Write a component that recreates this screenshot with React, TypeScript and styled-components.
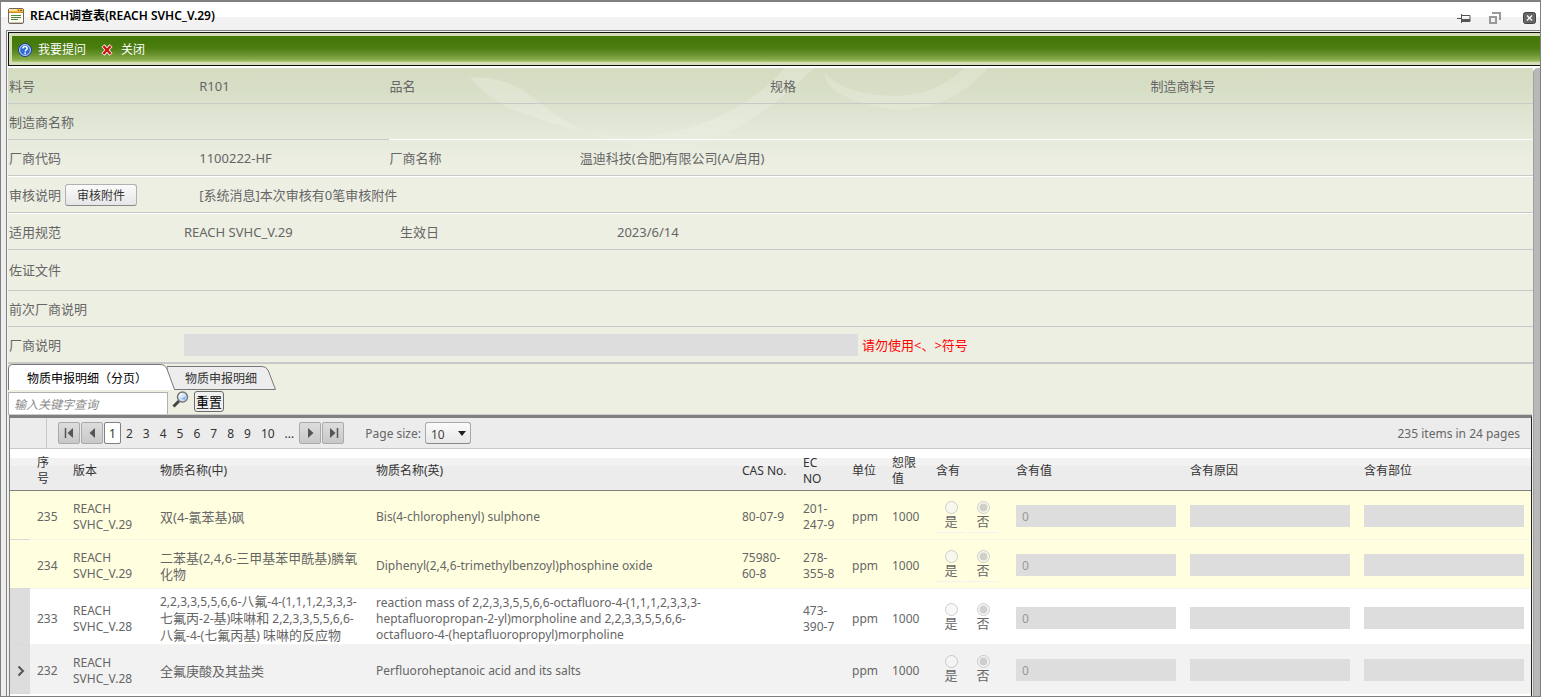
import React, { useState } from 'react';
import styled, { createGlobalStyle } from 'styled-components';

const GlobalStyle = createGlobalStyle`
  *, *::before, *::after { box-sizing: border-box; }
  body {
    margin: 0;
    background: #eeeeee;
    color: #666666;
    font-family: "Noto Sans", "Noto Sans CJK SC", sans-serif;
    font-size: 12px;
  }
  button, input, select { font-family: inherit; font-size: 12px; margin: 0; }
`;

const Window = styled.div`
  display: flex;
  flex-direction: column;
  min-height: 100vh;
  border: 1px solid #808080;
  border-top-width: 2px;
  background: #eeeeee;
`;

const TitleBar = styled.header`
  display: flex;
  align-items: center;
  height: 28px;
  padding: 0 4px 0 7px;
  background: linear-gradient(#ffffff 15px, #f2f2f2 15px);
`;

const Title = styled.h1`
  flex: 1;
  margin: 0 0 0 6px;
  color: #000000;
  font-size: 12px;
  font-weight: 600;
  line-height: 28px;
`;

const WindowButtons = styled.div`
  display: flex;
  align-items: center;
  gap: 18px;
  padding-top: 4px;
`;

const IconButton = styled.button`
  display: flex;
  padding: 0;
  border: 0;
  background: none;
`;

const CloseWindow = styled(IconButton)`
  margin-left: 4px;
`;

const Frame = styled.div`
  display: flex;
  flex: 1;
  flex-direction: column;
  margin-left: 5px;
  padding-left: 1px;
  border-top: 1px solid #808488;
  border-left: 1px solid #808488;
  background: #f4f6f0;
`;

const ToolBar = styled.div`
  display: flex;
  align-items: center;
  gap: 12px;
  height: 34px;
  margin-top: 1px;
  padding: 1px 6px 0;
  border: 1px solid #111111;
  border-right: 0;
  background: linear-gradient(#457a0a 0 6px, #4c7d12 12px, #66912c 18px, #8bae4e 24px, #a9c470 25px) 3px 3px / 100% 26px no-repeat, #d3ddb8;
`;

const ToolButton = styled.button`
  display: flex;
  align-items: center;
  gap: 6px;
  padding: 0 3px;
  border: 0;
  background: none;
  color: #ffffff;
  line-height: 16px;

  & + & { gap: 8px; padding-left: 0; }
`;

const Body = styled.div`
  display: flex;
  flex: 1;
  padding-top: 2px;
  background: #ffffff;
`;

const Main = styled.main`
  display: grid;
  grid-template-rows: max-content 1fr;
  grid-template-columns: minmax(0, 1fr);
  flex: 1;
  min-width: 0;
  background: linear-gradient(#d3dbc0, #d8dfc7 24px, #dee4d1 46px, #e6ebdc 72px, #eeefe3 104px);
`;

const ScrollTrack = styled.div`
  width: 7px;
  border-left: 1px solid #a0a0a0;
  border-top-left-radius: 5px;
  background: #b8b8b8;
`;

const Backdrop = styled.svg`
  grid-area: 1 / 1;
  width: 100%;
  height: 110px;
`;

const Content = styled.div`
  display: flex;
  flex-direction: column;
  grid-area: 1 / 1 / 3 / 2;
`;

const FieldRow = styled.div<{ $columns?: string; $height?: number; $light?: boolean; $line?: string }>`
  display: grid;
  grid-template-columns: ${(p) => p.$columns ?? 'repeat(8, minmax(0, 1fr))'};
  align-items: center;
  height: ${(p) => p.$height ?? 36}px;
  padding: 0 2px 0 1px;
  border-top: ${(p) => (p.$light ? '1px solid #ffffff' : '0')};
  border-bottom: ${(p) => p.$line ?? '1px solid #c8c8c8'};
  font-size: 13px;
  line-height: 20px;
`;

const Field = styled.div<{ $span?: number }>`
  display: flex;
  align-items: center;
  gap: 4px;
  grid-column: span ${(p) => p.$span ?? 1};
  white-space: nowrap;
`;

const SplitLine = styled.div`
  height: 1px;
  background: linear-gradient(90deg, #c8c8c8 25%, #ffffff 25%);
`;

const SmallButton = styled.button`
  height: 22px;
  padding: 1px 11px 0;
  border: 1px solid #b0b0b0;
  border-bottom-color: #888888;
  border-radius: 3px;
  background: linear-gradient(#fbfbfb, #e6e6e6);
  color: #333333;
  line-height: 20px;
`;

const GreyInput = styled.input`
  display: block;
  width: 100%;
  height: 22px;
  padding: 1px 6px 0;
  border: 0;
  border-radius: 0;
  background: #dddddd;
  color: #999999;
`;

const Warning = styled.span`
  padding-left: 4px;
  color: #ff0000;
`;

const Tabs = styled.div`
  display: flex;
  align-items: flex-end;
  height: 26px;
`;

const Tab = styled.button<{ $front?: boolean }>`
  position: relative;
  width: ${(p) => (p.$front ? 168 : 110)}px;
  height: 26px;
  margin-right: -9px;
  padding: 2px 0 0 ${(p) => (p.$front ? 19 : 18)}px;
  border: 0;
  background: none;
  z-index: ${(p) => (p.$front ? 1 : 0)};
  color: ${(p) => (p.$front ? '#000000' : '#333333')};
  text-align: left;
  white-space: nowrap;
`;

const TabShape = styled.svg`
  position: absolute;
  top: 0;
  left: 0;
`;

const TabText = styled.span`
  position: relative;
`;

const SearchRow = styled.div`
  display: flex;
  align-items: flex-start;
  height: 25px;
  padding-top: 1px;
`;

const SearchInput = styled.input`
  width: 160px;
  height: 23px;
  margin: 1px 4px 0 0;
  padding: 2px 5px 0;
  border: 1px solid #b0b0b0;
  border-radius: 0;
  background: #ffffff;
  &::placeholder { color: #888888; font-style: italic; }
`;

const ResetButton = styled.button`
  height: 21px;
  margin-left: 4px;
  padding: 1px 1px 0;
  border: 1px solid #6b6b6b;
  border-radius: 3px;
  background: #efefef;
  color: #000000;
  font-size: 13px;
  line-height: 19px;
`;

const Grid = styled.div`
  flex: 1;
  margin: 0 1px 0 1px;
  border: 1px solid #808080;
  border-top: 3px solid #808080;
  border-right: 1px solid #222222;
  border-bottom: 0;
  background: #ffffff;
  box-shadow: 0 -1px 0 #cccccc;
`;

const Pager = styled.div`
  display: flex;
  align-items: center;
  height: 31px;
  padding-right: 11px;
  border-bottom: 1px solid #c8c8c8;
  background: #ececec;
`;

const PagerGutter = styled.div`
  align-self: stretch;
  width: 37px;
  border-right: 1px solid #c8c8c8;
`;

const PagerGroup = styled.nav`
  display: flex;
  align-items: center;
  flex: 1;
  padding-left: 11px;
`;

const ArrowButton = styled.button`
  display: flex;
  align-items: center;
  justify-content: center;
  width: 22px;
  height: 22px;
  margin-right: 1px;
  padding: 0;
  border: 1px solid #aaaaaa;
  border-radius: 2px;
  background: linear-gradient(#dddddd, #c8c8c8);
`;

const PageLink = styled.a<{ $current?: boolean }>`
  display: block;
  height: 22px;
  padding: 1px 4px 0;
  border: 1px solid ${(p) => (p.$current ? '#808080' : 'transparent')};
  border-radius: 2px;
  background: ${(p) => (p.$current ? '#ffffff' : 'transparent')};
  color: #333333;
  line-height: 20px;
  text-decoration: none;
`;

const PageSize = styled.label`
  display: flex;
  align-items: center;
  gap: 4px;
  margin-left: 20px;
`;

const SelectBox = styled.span`
  display: grid;
  align-items: center;
`;

const SizeSelect = styled.select`
  grid-area: 1 / 1;
  width: 46px;
  height: 22px;
  padding: 2px 5px 0;
  appearance: none;
  border: 1px solid #a8a8a8;
  border-bottom-color: #888888;
  border-radius: 3px;
  background: linear-gradient(#fafafa, #e8e8e8);
  color: #444444;
`;

const SelectArrow = styled.svg`
  grid-area: 1 / 1;
  justify-self: end;
  margin-right: 5px;
  pointer-events: none;
`;

const Table = styled.table`
  width: 100%;
  border-collapse: separate;
  border-spacing: 0;
  table-layout: fixed;
  line-height: 16px;
`;

const HeadCell = styled.th`
  height: 42px;
  padding: 3px 7px 0;
  border-bottom: 1px solid #808080;
  background: linear-gradient(#ffffff 9px, #f2f2f2 9px 17px, #ececec 17px);
  color: #333333;
  font-weight: 400;
  text-align: left;
`;

type Tone = 'yellow' | 'white' | 'grey';
const toneColor: Record<Tone, string> = { yellow: '#ffffe0', white: '#ffffff', grey: '#f2f2f2' };

const Row = styled.tr<{ $tone: Tone; $tall?: boolean }>`
  height: ${(p) => (p.$tall ? 56 : 49)}px;
  background: ${(p) => toneColor[p.$tone]};
`;

const Cell = styled.td<{ $large?: boolean }>`
  padding: 4px 7px 0;
  border-bottom: 1px solid #f6f6f0;
  font-size: ${(p) => (p.$large ? 13 : 12)}px;
`;

const Han = styled.span`
  font-size: 13px;
`;

const MarkerCell = styled.td<{ $filled?: boolean }>`
  padding: 8px 0 0 7px;
  border-bottom: 1px solid #d9d9d9;
  background: ${(p) => (p.$filled ? '#dddddd' : 'transparent')};
`;

const InputCell = styled.td`
  padding: 2px 7px 0;
  border-bottom: 1px solid #f6f6f0;
`;

const Options = styled.div`
  display: flex;
  gap: 2px;
`;

const Option = styled.label<{ $lined?: boolean }>`
  display: flex;
  flex-direction: column;
  align-items: center;
  width: 30px;
  padding: 2px 0 3px;
  border-bottom: 1px solid ${(p) => (p.$lined ? '#f2f2f2' : 'transparent')};
  font-size: 13px;
  line-height: 15px;
`;

const Radio = styled.input`
  width: 13px;
  height: 13px;
`;

function WindowIcon() {
  return (
    <svg width="16" height="16" viewBox="0 0 16 16" aria-hidden="true">
      <rect x="0.5" y="0.5" width="15" height="15" rx="1.5" fill="#fffdf5" stroke="#6f665c" />
      <path d="M1 1h14v4H1z" fill="#f5b53a" />
      <path d="M1 1h8v2H1z" fill="#ffe49a" />
      <path d="M10 2h1v1h-1zM12 2h2v1h-2z" fill="#80642a" />
      <path d="M1 4.5h14" stroke="#d18b28" />
      <path d="M3 7.5h10M3 9.5h10M3 11.5h7" stroke="#4f8a3a" />
      <path d="M1 14.5h14" stroke="#cfc6b5" />
    </svg>
  );
}

function HelpIcon() {
  return (
    <svg width="14" height="16" viewBox="0 0 14 16" aria-hidden="true">
      <circle cx="7" cy="8" r="6.5" fill="#2f6bd3" stroke="#1c448f" />
      <circle cx="7" cy="8" r="5.4" fill="none" stroke="#c9dcfa" />
      <path d="M4.9 6.6c0-1.4 1-2 2.1-2s2.2.7 2.2 1.9c0 1.3-2 1.4-2 2.9" fill="none" stroke="#fff" strokeWidth="1.5" />
      <path d="M6.4 10.6h1.6v1.5H6.4z" fill="#fff" />
    </svg>
  );
}

function CrossIcon() {
  return (
    <svg width="12" height="12" viewBox="0 0 12 12" aria-hidden="true">
      <path d="M2 1.5L10 10.5M10 1.5L2 10.5" stroke="#ffffff" strokeWidth="4" />
      <path d="M2.3 2L9.7 10M9.7 2L2.3 10" stroke="#cc1111" strokeWidth="2.4" />
    </svg>
  );
}

function Magnifier() {
  return (
    <svg width="18" height="18" viewBox="0 0 18 18" aria-hidden="true">
      <path d="M1.5 15.5L7 10" stroke="#444444" strokeWidth="3" />
      <circle cx="10.5" cy="6" r="5" fill="#cfe3fa" stroke="#777777" strokeWidth="1.5" />
      <path d="M7.5 6a3 3 0 0 1 3-3" fill="none" stroke="#ffffff" strokeWidth="1.5" />
      <path d="M9 8l5-3-1 4z" fill="#86b4ee" />
    </svg>
  );
}

const arrowPaths: Record<string, React.ReactNode> = {
  first: <><path d="M1.5 1v10" stroke="#555" strokeWidth="1.5" /><path d="M9 1v10L3.5 6z" fill="#555" /></>,
  prev: <path d="M8 1v10L2.5 6z" fill="#555" />,
  next: <path d="M3 1v10L8.5 6z" fill="#555" />,
  last: <><path d="M2 1v10L7.5 6z" fill="#555" /><path d="M9.5 1v10" stroke="#555" strokeWidth="1.5" /></>,
};

function Arrow({ kind, label }: { kind: string; label: string }) {
  return (
    <ArrowButton aria-label={label}>
      <svg width="11" height="12" viewBox="0 0 11 12" aria-hidden="true">{arrowPaths[kind]}</svg>
    </ArrowButton>
  );
}

interface Substance {
  no: number;
  version: string;
  zh: string;
  en: string;
  cas: string;
  ec: string;
  tone: Tone;
  tall?: boolean;
  active?: boolean;
}

const substances: Substance[] = [
  { no: 235, version: 'REACH SVHC_V.29', zh: '双(4-氯苯基)砜', en: 'Bis(4-chlorophenyl) sulphone', cas: '80-07-9', ec: '201-247-9', tone: 'yellow' },
  { no: 234, version: 'REACH SVHC_V.29', zh: '二苯基(2,4,6-三甲基苯甲酰基)膦氧化物', en: 'Diphenyl(2,4,6-trimethylbenzoyl)phosphine oxide', cas: '75980-60-8', ec: '278-355-8', tone: 'yellow' },
  { no: 233, version: 'REACH SVHC_V.28', zh: '2,2,3,3,5,5,6,6-八氟-4-(1,1,1,2,3,3,3-七氟丙-2-基)味啉和 2,2,3,3,5,5,6,6-八氟-4-(七氟丙基) 味啉的反应物', en: 'reaction mass of 2,2,3,3,5,5,6,6-octafluoro-4-(1,1,1,2,3,3,3-heptafluoropropan-2-yl)morpholine and 2,2,3,3,5,5,6,6-octafluoro-4-(heptafluoropropyl)morpholine', cas: '', ec: '473-390-7', tone: 'white', tall: true },
  { no: 232, version: 'REACH SVHC_V.28', zh: '全氟庚酸及其盐类', en: 'Perfluoroheptanoic acid and its salts', cas: '', ec: '', tone: 'grey', active: true },
];

const columnWidths = [20, 36, 87, 216, 0, 61, 49, 40, 44, 80, 174, 174, 174];
const headings = ['', '序号', '版本', '物质名称(中)', '物质名称(英)', 'CAS No.', 'EC NO', '单位', '恕限值', '含有', '含有值', '含有原因', '含有部位'];

/* Long names keep their digits one size smaller so that they fit the column. */
function LongName({ text }: { text: string }) {
  return (
    <>
      {text.split(/([\u4e00-\u9fff]+)/).map((part, i) => (i % 2 ? <Han key={i}>{part}</Han> : part))}
    </>
  );
}

function SubstanceRow({ item }: { item: Substance }) {
  const lined = item.tone === 'yellow';
  return (
    <Row $tone={item.tone} $tall={item.tall}>
      <MarkerCell $filled={item.tone !== 'yellow'}>
        {item.active && (
          <svg width="8" height="12" viewBox="0 0 8 12" aria-hidden="true">
            <path d="M1.5 1.5L6 6L1.5 10.5" fill="none" stroke="#555555" strokeWidth="2" />
          </svg>
        )}
      </MarkerCell>
      <Cell>{item.no}</Cell>
      <Cell>{item.version}</Cell>
      <Cell $large={!item.tall}>{item.tall ? <LongName text={item.zh} /> : item.zh}</Cell>
      <Cell>{item.en}</Cell>
      <Cell>{item.cas}</Cell>
      <Cell>{item.ec}</Cell>
      <Cell>ppm</Cell>
      <Cell>1000</Cell>
      <InputCell>
        <Options>
          <Option $lined={lined}><Radio type="radio" name={`contains-${item.no}`} disabled />是</Option>
          <Option $lined={lined}><Radio type="radio" name={`contains-${item.no}`} disabled defaultChecked />否</Option>
        </Options>
      </InputCell>
      <InputCell><GreyInput aria-label="含有值" defaultValue="0" disabled /></InputCell>
      <InputCell><GreyInput aria-label="含有原因" disabled /></InputCell>
      <InputCell><GreyInput aria-label="含有部位" disabled /></InputCell>
    </Row>
  );
}

export default function App() {
  const [page, setPage] = useState(1);
  return (
    <>
      <GlobalStyle />
      <Window>
        <TitleBar>
          <WindowIcon />
          <Title>REACH调查表(REACH SVHC_V.29)</Title>
          <WindowButtons>
            <IconButton aria-label="固定">
              <svg width="14" height="12" viewBox="0 0 14 12"><path d="M0 6.5h5M4.5 2v9M5 3.5h8v6H5" fill="none" stroke="#555555" /><path d="M5 7h8v3H5z" fill="#555555" /></svg>
            </IconButton>
            <IconButton aria-label="还原">
              <svg width="12" height="12" viewBox="0 0 12 12"><path d="M1 5h6v6H1zM3 1h8v7" fill="none" stroke="#999999" strokeWidth="2" /></svg>
            </IconButton>
            <CloseWindow aria-label="关闭窗口">
              <svg width="13" height="12" viewBox="0 0 13 12"><rect x="0.5" y="0.5" width="12" height="11" rx="2" fill="#666666" stroke="#444444" /><path d="M4 3.5l5 5M9 3.5l-5 5" stroke="#ffffff" strokeWidth="1.3" /></svg>
            </CloseWindow>
          </WindowButtons>
        </TitleBar>
        <Frame>
          <ToolBar>
            <ToolButton><HelpIcon />我要提问</ToolButton>
            <ToolButton><CrossIcon />关闭</ToolButton>
          </ToolBar>
          <Body>
            <Main>
              <Backdrop viewBox="0 0 1524 110" preserveAspectRatio="none" aria-hidden="true">
                <g fill="#eef1e4">
                  <path d="M776 0C745 38 690 62 640 68C590 72 550 58 500 40C480 28 466 16 462 10C480 8 500 12 520 26C550 50 600 90 690 76C740 62 780 24 806 0z" opacity="0.35" />
                  <path d="M955 0C930 24 900 34 850 24C830 18 820 10 816 4C814 20 840 36 890 42C930 42 960 22 980 0z" opacity="0.3" />
                </g>
              </Backdrop>
              <Content>
                <FieldRow>
                  <Field>料号</Field>
                  <Field>R101</Field>
                  <Field $span={2}>品名</Field>
                  <Field $span={2}>规格</Field>
                  <Field $span={2}>制造商料号</Field>
                </FieldRow>
                <FieldRow $height={35} $line="0">
                  <Field>制造商名称</Field>
                </FieldRow>
                <SplitLine />
                <FieldRow>
                  <Field>厂商代码</Field>
                  <Field>1100222-HF</Field>
                  <Field>厂商名称</Field>
                  <Field>温迪科技(合肥)有限公司(A/启用)</Field>
                </FieldRow>
                <FieldRow $height={37} $light>
                  <Field>审核说明<SmallButton>审核附件</SmallButton></Field>
                  <Field>[系统消息]本次审核有0笔审核附件</Field>
                </FieldRow>
                <FieldRow $height={37} $light $columns="175px 216px 217px 1fr">
                  <Field>适用规范</Field>
                  <Field>REACH SVHC_V.29</Field>
                  <Field>生效日</Field>
                  <Field>2023/6/14</Field>
                </FieldRow>
                <FieldRow $height={41}><Field>佐证文件</Field></FieldRow>
                <FieldRow><Field $span={2}>前次厂商说明</Field></FieldRow>
                <FieldRow $height={37} $columns="175px minmax(0, 674px) 1fr" $line="2px solid #c8c8c8">
                  <Field as="label" htmlFor="vendor-note">厂商说明</Field>
                  <GreyInput id="vendor-note" disabled />
                  <Field><Warning>请勿使用&lt;、&gt;符号</Warning></Field>
                </FieldRow>
                <Tabs role="tablist">
                  <Tab role="tab" aria-selected="true" $front>
                    <TabShape width="168" height="26" viewBox="0 0 168 26" aria-hidden="true">
                      <path d="M0.5 26V4Q0.5 0.5 4 0.5H152Q157 0.5 159 5L166.5 25.5V26z" fill="#ffffff" stroke="#777777" />
                      <path d="M1 25.5h165" stroke="#ffffff" />
                    </TabShape>
                    <TabText>物质申报明细（分页）</TabText>
                  </Tab>
                  <Tab role="tab" aria-selected="false">
                    <TabShape width="110" height="26" viewBox="0 0 110 26" aria-hidden="true">
                      <path d="M0 2.5H95Q99 2.5 101 6L108.5 25.5H0z" fill="#ededed" stroke="#777777" />
                    </TabShape>
                    <TabText>物质申报明细</TabText>
                  </Tab>
                </Tabs>
                <SearchRow>
                  <SearchInput aria-label="关键字" placeholder="输入关键字查询" />
                  <IconButton aria-label="查询"><Magnifier /></IconButton>
                  <ResetButton>重置</ResetButton>
                </SearchRow>
                <Grid>
                  <Pager>
                    <PagerGutter />
                    <PagerGroup>
                      <Arrow kind="first" label="第一页" />
                      <Arrow kind="prev" label="上一页" />
                      {[1, 2, 3, 4, 5, 6, 7, 8, 9, 10].map((n) => (
                        <PageLink key={n} href={`#page-${n}`} $current={n === page} onClick={() => setPage(n)}>{n}</PageLink>
                      ))}
                      <PageLink href="#more">...</PageLink>
                      <Arrow kind="next" label="下一页" />
                      <Arrow kind="last" label="最后一页" />
                      <PageSize>
                        Page size:
                        <SelectBox>
                          <SizeSelect defaultValue="10"><option>10</option><option>20</option><option>50</option></SizeSelect>
                          <SelectArrow width="8" height="5" viewBox="0 0 8 5"><path d="M0 0h8L4 5z" fill="#222222" /></SelectArrow>
                        </SelectBox>
                      </PageSize>
                    </PagerGroup>
                    <span>235 items in 24 pages</span>
                  </Pager>
                  <Table>
                    <colgroup>
                      {columnWidths.map((w, i) => <col key={i} width={w || undefined} />)}
                    </colgroup>
                    <thead>
                      <tr>{headings.map((h, i) => <HeadCell key={i}>{h}</HeadCell>)}</tr>
                    </thead>
                    <tbody>
                      {substances.map((s) => <SubstanceRow key={s.no} item={s} />)}
                    </tbody>
                  </Table>
                </Grid>
              </Content>
            </Main>
            <ScrollTrack />
          </Body>
        </Frame>
      </Window>
    </>
  );
}
